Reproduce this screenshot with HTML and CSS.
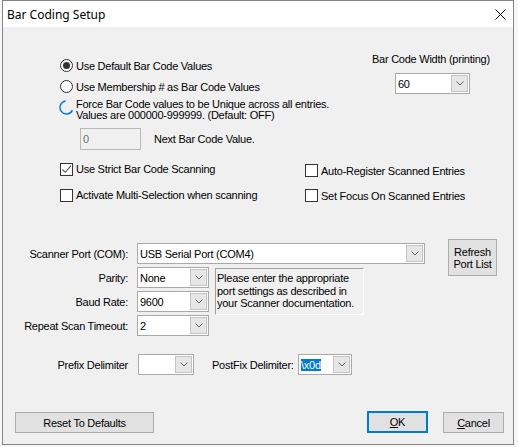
FILE: index.html
```html
<!DOCTYPE html>
<html>
<head>
<meta charset="utf-8">
<link rel="stylesheet" href="styles.css">
</head>
<body>
<div class="win">
  <div class="titlebar">
    <span class="title">Bar Coding Setup</span>
    <svg class="close" width="11" height="11" viewBox="0 0 11 11"><path d="M0.5 0.5 L10.5 10.5 M10.5 0.5 L0.5 10.5" stroke="#000" stroke-width="1" fill="none"/></svg>
  </div>
  <div class="content">
    <div class="s1">
      <div class="opts">
        <div class="row"><span class="radio on"></span><span>Use Default Bar Code Values</span></div>
        <div class="row"><span class="radio"></span><span>Use Membership # as Bar Code Values</span></div>
        <div class="row r3">
          <svg class="rhover" width="15" height="15" viewBox="0 0 15 15"><path d="M6.6 1.06 A6.5 6.5 0 1 0 13.44 10.14" stroke="#0078d7" stroke-width="1.4" fill="none"/></svg>
          <span class="two">Force Bar Code values to be Unique across all entries.<br>Values are 000000-999999. (Default: OFF)</span>
        </div>
        <div class="nextrow"><div class="txt">0</div><span>Next Bar Code Value.</span></div>
      </div>
      <div class="widthcol">
        <div class="wlbl">Bar Code Width (printing)</div>
        <div class="combo c60"><span class="val">60</span><span class="dd"><svg width="8" height="5" viewBox="0 0 8 5"><path d="M0.5 0.5 L4 4 L7.5 0.5" stroke="#606060" fill="none"/></svg></span></div>
      </div>
    </div>

    <div class="s2">
      <div class="ccol left">
        <div class="crow"><span class="chk"><svg width="11" height="11" viewBox="0 0 11 11"><path d="M1.5 5.5 L4.3 8.3 L9.8 1.8" stroke="#555" stroke-width="1.1" fill="none"/></svg></span><span>Use Strict Bar Code Scanning</span></div>
        <div class="crow"><span class="chk"></span><span>Activate Multi-Selection when scanning</span></div>
      </div>
      <div class="ccol right">
        <div class="crow r"><span class="chk"></span><span>Auto-Register Scanned Entries</span></div>
        <div class="crow r"><span class="chk"></span><span>Set Focus On Scanned Entries</span></div>
      </div>
    </div>

    <div class="s3">
      <div class="lbl l1">Scanner Port (COM):</div>
      <div class="combo cport"><span class="val">USB Serial Port (COM4)</span><span class="dd"><svg width="8" height="5" viewBox="0 0 8 5"><path d="M0.5 0.5 L4 4 L7.5 0.5" stroke="#606060" fill="none"/></svg></span></div>
      <div class="refresh">Refresh<br>Port List</div>

      <div class="lbl l2">Parity:</div>
      <div class="combo csm r2"><span class="val">None</span><span class="dd"><svg width="8" height="5" viewBox="0 0 8 5"><path d="M0.5 0.5 L4 4 L7.5 0.5" stroke="#606060" fill="none"/></svg></span></div>
      <div class="info">Please enter the appropriate<br>port settings as described in<br>your Scanner documentation.</div>

      <div class="lbl l3">Baud Rate:</div>
      <div class="combo csm r3c"><span class="val">9600</span><span class="dd"><svg width="8" height="5" viewBox="0 0 8 5"><path d="M0.5 0.5 L4 4 L7.5 0.5" stroke="#606060" fill="none"/></svg></span></div>

      <div class="lbl l4">Repeat Scan Timeout:</div>
      <div class="combo csm r4"><span class="val">2</span><span class="dd"><svg width="8" height="5" viewBox="0 0 8 5"><path d="M0.5 0.5 L4 4 L7.5 0.5" stroke="#606060" fill="none"/></svg></span></div>
    </div>

    <div class="s4">
      <div class="plbl">Prefix Delimiter</div>
      <div class="combo cpre"><span class="val"></span><span class="dd"><svg width="8" height="5" viewBox="0 0 8 5"><path d="M0.5 0.5 L4 4 L7.5 0.5" stroke="#606060" fill="none"/></svg></span></div>
      <div class="postlbl">PostFix Delimiter:</div>
      <div class="combo cpost"><span class="val"><span class="sel">\x0d</span></span><span class="dd"><svg width="8" height="5" viewBox="0 0 8 5"><path d="M0.5 0.5 L4 4 L7.5 0.5" stroke="#606060" fill="none"/></svg></span></div>
    </div>

    <div class="s5">
      <div class="btn reset">Reset To Defaults</div>
      <div class="btn ok"><span class="u">O</span>K</div>
      <div class="btn cancel"><span class="u">C</span>ancel</div>
    </div>
  </div>
</div>
</body>
</html>
```

FILE: styles.css
```css
html, body {
  margin: 0;
  padding: 0;
}
body {
  width: 518px;
  height: 447px;
  overflow: hidden;
  background: #f7f7f7;
  font-family: "Liberation Sans", Arial, sans-serif;
  font-size: 11px;
  letter-spacing: -0.25px;
  color: #000;
}
.win {
  margin-left: 2px;
  width: 510px;
  height: 443px;
  border: 1px solid #858585;
  background: #f0f0f0;
  display: flex;
  flex-direction: column;
}
.titlebar {
  height: 26px;
  flex: none;
  background: #fff;
  display: flex;
  align-items: center;
  padding-left: 4px;
}
.title {
  font-family: "Noto Sans", "Open Sans", sans-serif;
  font-size: 12px;
  letter-spacing: 0;
}
.close {
  margin-left: auto;
  margin-right: 7px;
}
.content {
  flex: 1;
  display: flex;
  flex-direction: column;
}

/* section 1 */
.s1 {
  display: flex;
  margin-top: 28px;
  padding-left: 57px;
}
.opts {
  width: 311px;
  flex: none;
}
.row {
  display: flex;
  align-items: center;
  height: 21px;
}
.radio {
  width: 13px;
  height: 13px;
  box-sizing: border-box;
  border: 1px solid #333;
  border-radius: 50%;
  background: #fff;
  margin-right: 3px;
  display: flex;
  align-items: center;
  justify-content: center;
  flex: none;
}
.radio.on::after {
  content: "";
  width: 7px;
  height: 7px;
  border-radius: 50%;
  background: #333;
}
.row.r3 {
  height: 25px;
  align-items: flex-start;
}
.rhover {
  margin-top: 3px;
  margin-left: -1px;
  margin-right: 2px;
  flex: none;
}
.two {
  line-height: 11px;
  margin-top: 2px;
}
.nextrow {
  display: flex;
  align-items: center;
  margin-top: 6px;
  height: 22px;
}
.txt {
  margin-left: 20px;
  width: 61px;
  height: 22px;
  box-sizing: border-box;
  border: 1px solid #b8b8b8;
  background: #f0f0f0;
  color: #6d6d6d;
  padding-left: 2px;
  display: flex;
  align-items: center;
}
.nextrow span {
  margin-left: 13px;
}
.widthcol {
  margin-top: -2px;
  width: 130px;
  flex: none;
}
.wlbl {
  line-height: 13px;
  padding-left: 1px;
  white-space: nowrap;
}
.c60 {
  margin-top: 7px;
  margin-left: 24px;
  width: 75px;
}

/* combo */
.combo {
  display: flex;
  align-items: center;
  box-sizing: border-box;
  height: 21px;
  background: #fff;
  border: 1px solid #a9a9a9;
}
.combo .val {
  flex: 1;
  padding-left: 2px;
  white-space: nowrap;
  overflow: hidden;
}
.combo .dd {
  flex: none;
  width: 17px;
  height: 17px;
  box-sizing: border-box;
  margin-right: 1px;
  background: #e6e6e6;
  border: 1px solid #c4c4c4;
  display: flex;
  align-items: center;
  justify-content: center;
}

/* section 2 */
.s2 {
  display: flex;
  margin-top: 6px;
  padding-left: 57px;
}
.ccol.left {
  width: 245px;
  flex: none;
}
.ccol.right {
  padding-top: 2px;
}
.crow {
  display: flex;
  align-items: center;
  height: 26px;
}
.crow.r {
  height: 25px;
}
.chk {
  width: 13px;
  height: 13px;
  box-sizing: border-box;
  border: 1px solid #333;
  background: #fff;
  margin-right: 3px;
  flex: none;
  display: flex;
  align-items: center;
  justify-content: center;
}

/* section 3 */
.s3 {
  margin-top: 35px;
  display: grid;
  grid-template-columns: 134px 78px 212px 1fr;
  grid-template-rows: 21px 21px 21px 21px;
  row-gap: 3px;
}
.lbl {
  grid-column: 1;
  text-align: right;
  padding-right: 9px;
  align-self: center;
}
.l1 { grid-row: 1; }
.l2 { grid-row: 2; }
.l3 { grid-row: 3; }
.l4 { grid-row: 4; }
.cport {
  grid-column: 2 / 4;
  grid-row: 1;
  width: 288px;
}
.csm {
  grid-column: 2;
  width: 72px;
}
.r2 { grid-row: 2; }
.r3c { grid-row: 3; }
.r4 { grid-row: 4; }
.refresh {
  grid-column: 4;
  grid-row: 1 / 3;
  align-self: start;
  margin-top: -4px;
  margin-left: 21px;
  width: 49px;
  height: 37px;
  box-sizing: border-box;
  background: #e1e1e1;
  border: 1px solid #adadad;
  display: flex;
  align-items: center;
  justify-content: center;
  text-align: center;
  line-height: 12px;
}
.info {
  grid-column: 3;
  grid-row: 2 / 4;
  align-self: start;
  margin-top: 1px;
  width: 149px;
  height: 47px;
  box-sizing: border-box;
  border-top: 1px solid #a0a0a0;
  border-left: 1px solid #a0a0a0;
  border-right: 1px solid #fff;
  border-bottom: 1px solid #fff;
  padding: 3px 0 0 1px;
  line-height: 12.5px;
}

/* section 4 */
.s4 {
  margin-top: 18px;
  display: flex;
  align-items: center;
  height: 21px;
}
.plbl {
  width: 135px;
  box-sizing: border-box;
  padding-right: 10px;
  text-align: right;
}
.cpre {
  width: 56px;
}
.postlbl {
  margin-left: 18px;
  width: 86px;
}
.cpost {
  width: 54px;
}
.sel {
  background: #0078d7;
  color: #fff;
  padding: 1px 0;
}

/* section 5 */
.s5 {
  margin-top: 37px;
  display: flex;
  align-items: flex-start;
}
.btn {
  box-sizing: border-box;
  height: 21px;
  background: #e1e1e1;
  border: 1px solid #adadad;
  display: flex;
  align-items: center;
  justify-content: center;
}
.reset {
  margin-left: 12px;
  width: 139px;
}
.ok {
  margin-left: auto;
  width: 61px;
  height: 22px;
  margin-top: -1px;
  border: 2px solid #0078d7;
}
.cancel {
  margin-left: 15px;
  margin-right: 9px;
  width: 61px;
}
.u {
  text-decoration: underline;
}
```
